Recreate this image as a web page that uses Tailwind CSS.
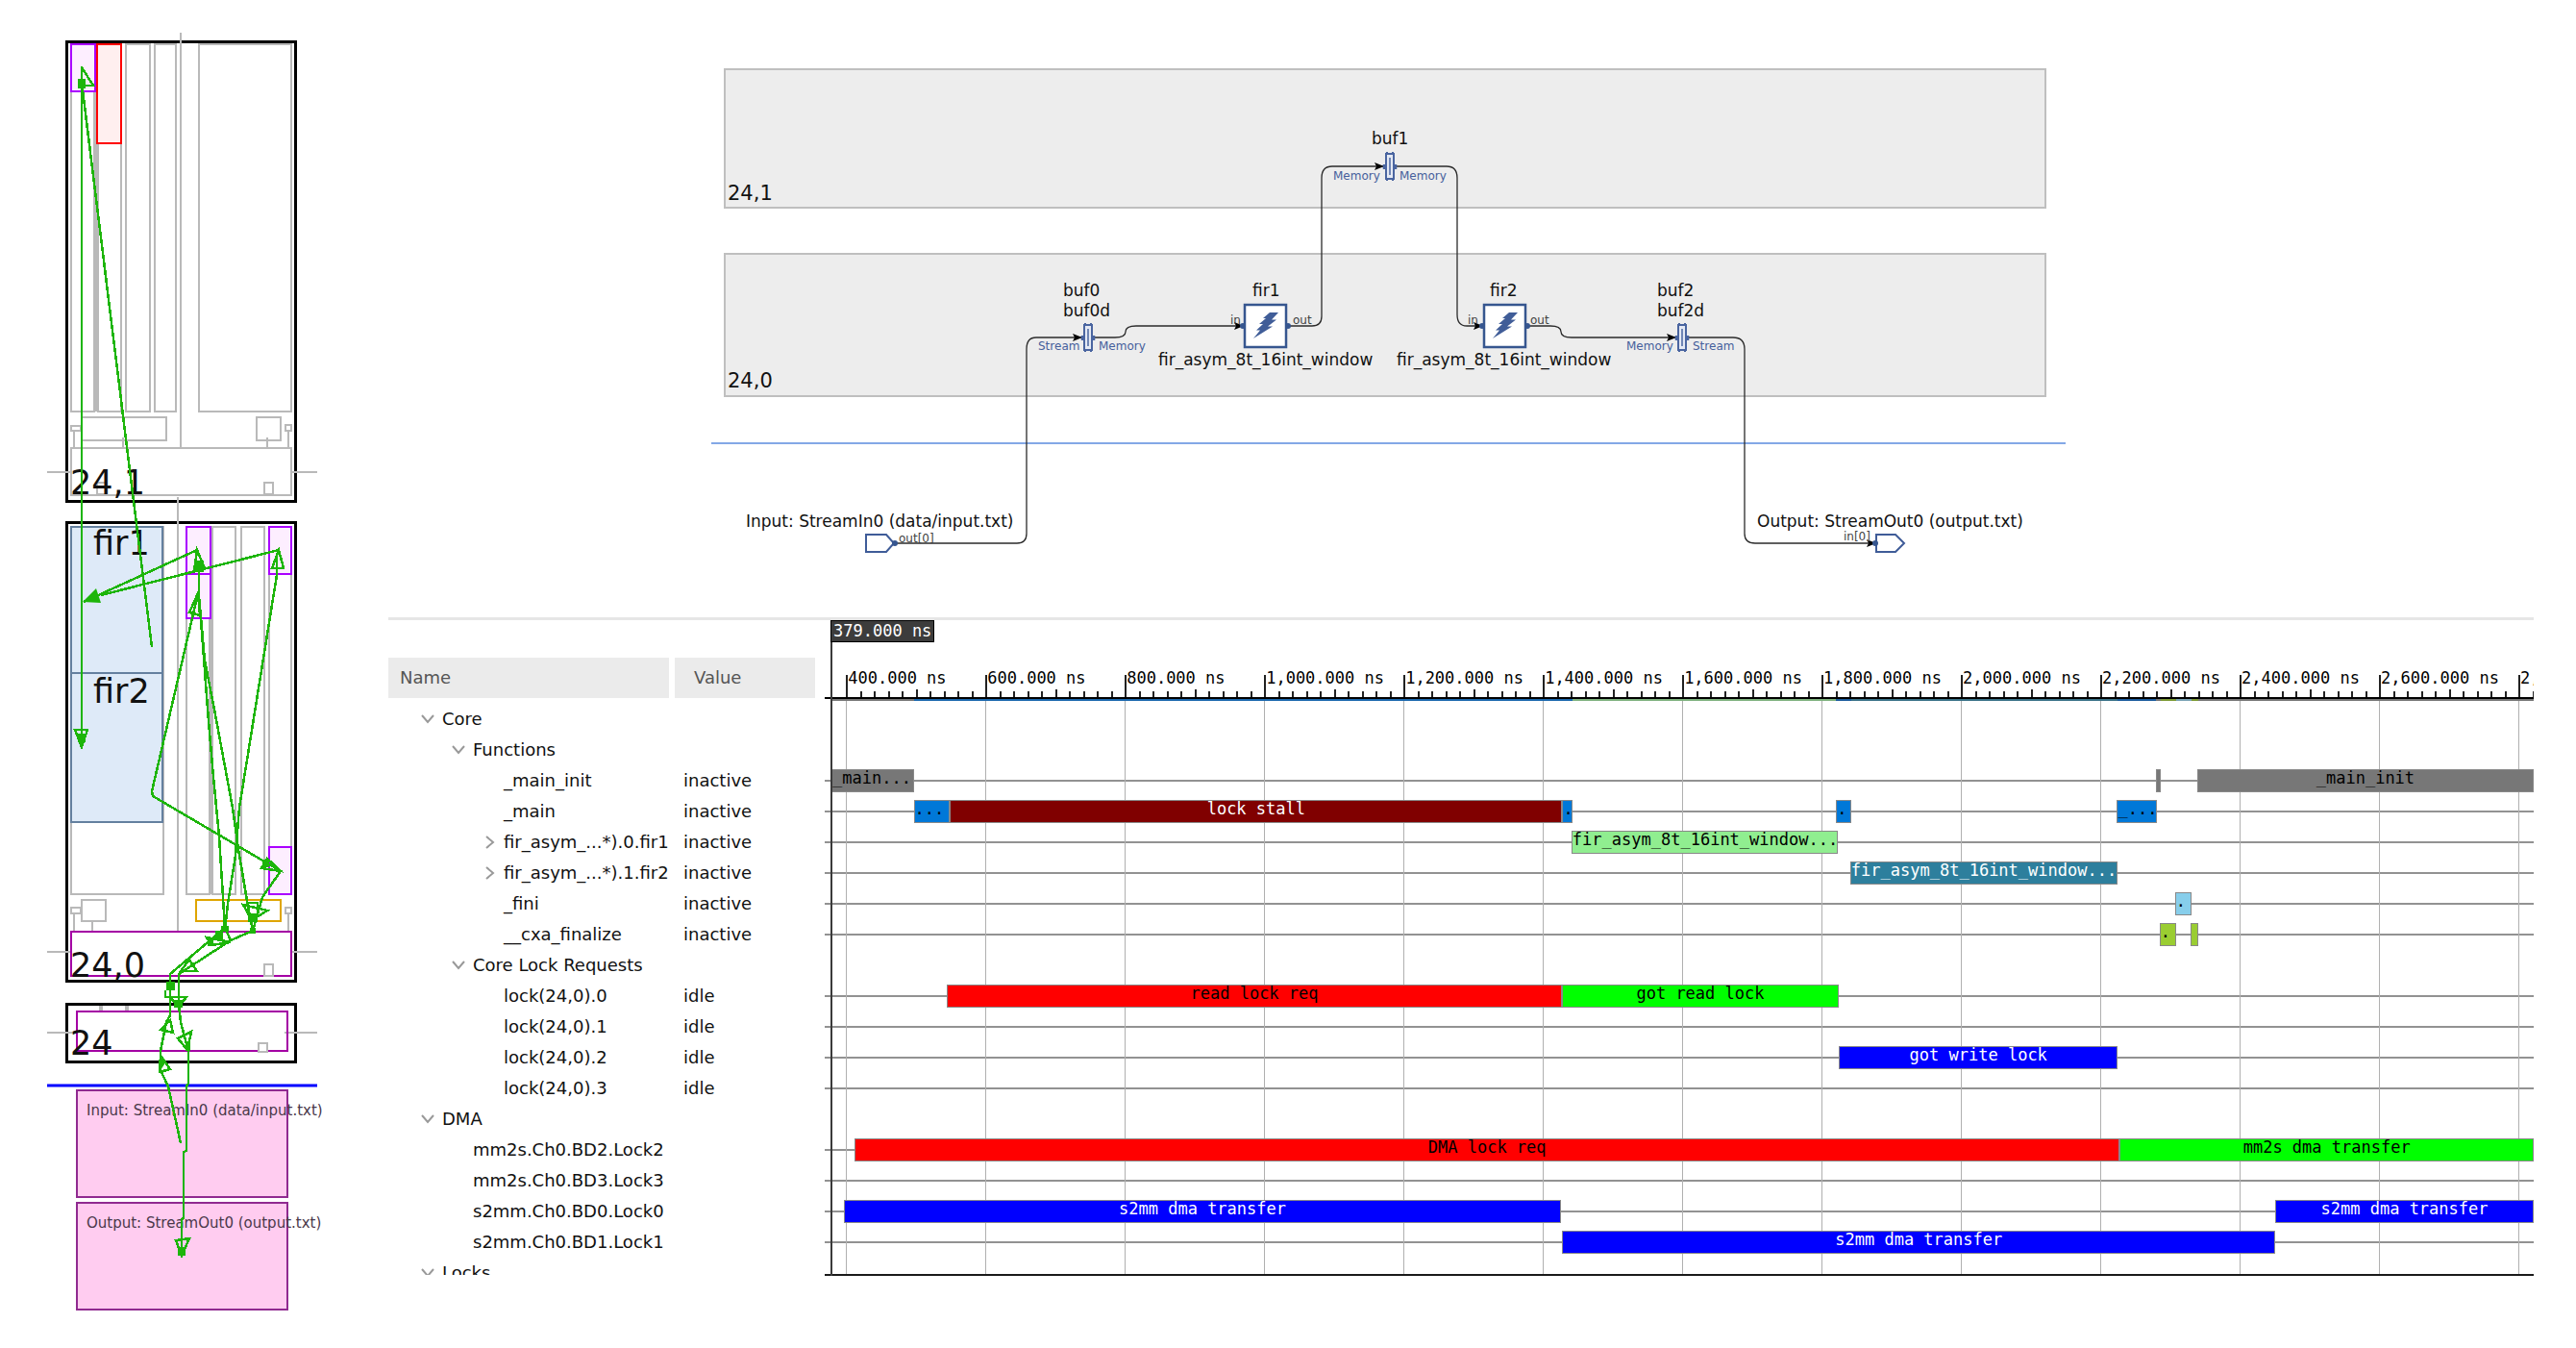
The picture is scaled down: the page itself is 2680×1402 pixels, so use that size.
<!DOCTYPE html>
<html lang="en">
<head>
<meta charset="utf-8">
<title>Graph and trace view</title>
<script src="https://cdn.jsdelivr.net/npm/@tailwindcss/browser@4"></script>
</head>
<body class="flex gap-[73px] bg-white pt-[30px] pr-11 pl-12 font-['DejaVu_Sans',sans-serif] text-[#111]">

<!-- Device floorplan -->
<aside class="w-[283px] shrink-0" aria-label="Device view">
<svg class="block h-auto w-full overflow-visible" viewBox="48 30 283 1342" fill="none">
  <g stroke="#b9b9b9" stroke-width="2" shape-rendering="crispEdges">
    <rect x="74" y="46" width="24" height="382"/><rect x="102" y="46" width="24" height="382"/>
    <rect x="131" y="46" width="25" height="382"/><rect x="161" y="46" width="22" height="382"/>
    <rect x="207" y="46" width="96" height="382"/>
    <path d="M100 46V428" stroke-width="4"/>
    <path d="M86 434H173V458H86M128 455V465M278 455V465M77 447V465M300 448V465"/>
    <rect x="267" y="434" width="25" height="24"/><rect x="74" y="443" width="10" height="5"/><rect x="297" y="442" width="6" height="6"/>
    <rect x="74" y="466" width="229" height="49"/><rect x="275" y="502" width="9" height="12"/><rect x="101" y="502" width="9" height="12"/>
    <rect x="74" y="548" width="96" height="382"/>
    <rect x="194" y="548" width="24" height="382"/><rect x="221" y="548" width="24" height="382"/>
    <rect x="251" y="548" width="24" height="382"/><rect x="280" y="548" width="23" height="382"/>
    <path d="M219.500 548V930" stroke-width="3"/>
    <rect x="85" y="936" width="25" height="22"/><rect x="74" y="944" width="10" height="6"/><rect x="297" y="944" width="6" height="6"/>
    <path d="M77 950V968M96 958V968M300 950V968"/>
  </g>
  <g stroke="#000" stroke-width="3" shape-rendering="crispEdges">
    <rect x="69" y="43" width="238" height="478"/><rect x="69" y="543" width="238" height="477"/><rect x="69" y="1044" width="238" height="60"/>
  </g>
  <g stroke="#b9b9b9" stroke-width="2" shape-rendering="crispEdges">
    <path d="M188 34V465M185 517V968M49 491H74M303 491H330M49 990H74M303 990H330M49 1074H80M296 1074H330"/>
    <path d="M105 1046V1052M132 1046V1052" stroke-width="4"/>
  </g>
  <g stroke="#a0f" stroke-width="2" fill="#fdeeff" shape-rendering="crispEdges">
    <rect x="74" y="46" width="25" height="49"/>
    <rect x="194" y="548" width="25" height="49"/><rect x="194" y="597" width="25" height="46"/>
    <rect x="280" y="548" width="23" height="49"/><rect x="280" y="881" width="23" height="49"/>
  </g>
  <rect x="101" y="46" width="25" height="103" fill="#ffefef" stroke="#f00" stroke-width="2"/>
  <g stroke="#64809f" stroke-width="2" fill="#deeaf8" shape-rendering="crispEdges">
    <rect x="74" y="548" width="95" height="152"/><rect x="74" y="700" width="95" height="155"/>
  </g>
  <rect x="204" y="936" width="88" height="22" stroke="#dfa500" stroke-width="2"/>
  <g stroke="#a400a4" stroke-width="2" shape-rendering="crispEdges">
    <rect x="74" y="969" width="229" height="46"/><rect x="80" y="1052" width="219" height="41"/>
  </g>
  <g stroke="#b9b9b9" stroke-width="2" fill="#fff" shape-rendering="crispEdges">
    <rect x="275" y="1003" width="9" height="12"/><rect x="269" y="1085" width="9" height="9"/>
  </g>
  <path d="M49 1129H330" stroke="#00f" stroke-width="3"/>
  <g stroke="#902a90" stroke-width="2" fill="#ffccf0" shape-rendering="crispEdges">
    <rect x="80" y="1134" width="219" height="111"/><rect x="80" y="1251" width="219" height="111"/>
  </g>
  <g class="text-[35px]" fill="#111">
    <text x="73" y="514">24,1</text><text x="97" y="577">fir1</text><text x="97" y="731">fir2</text>
    <text x="73" y="1016">24,0</text><text x="73" y="1097">24</text>
  </g>
  <g class="text-[15px]" fill="#4a384a">
    <text x="90" y="1160">Input: StreamIn0 (data/input.txt)</text>
    <text x="90" y="1277">Output: StreamOut0 (output.txt)</text>
  </g>
  <!-- Data-flow nets -->
  <g stroke="#1db50a" stroke-width="2.500" shape-rendering="crispEdges">
    <path d="M85 69V777M85 86L140 529L158 673M85 70L97 89H85"/>
    <path d="M205 572L87 626M290 572L105 619"/>
    <path d="M205 572L213 591L202 594ZM207 595V620L210 658L217 750L222 808L228 870L232 933L234 968"/>
    <path d="M207 620L213 687L223 738L242 840L248 883L257 937L263 968"/>
    <path d="M288 598L249 840L245 890L237 940L234 968"/>
    <path d="M206 617L158 823L159 828L292 906L273 933L263 968"/>
    <path d="M206 617L197 637L208 640ZM290 572L295 591H283ZM288 580V598M78 759H91L85 777Z"/>
    <path d="M278 893L272 903L292 906ZM253 941L278 947L262 957ZM258 939H268V951H258Z"/>
    <path d="M234 965L177 1013V1056L173 1063L167 1093V1113L175 1130L188 1189"/>
    <path d="M263 968L240 978L186 1013V1045L188 1063L196 1093V1127L194 1130V1197L191 1198V1267L189 1268V1306"/>
    <path d="M215 975L240 980L220 983ZM234 965L240 978M197 998L205 1010H188ZM172 1030V1037H194L186 1047L177 1037"/>
    <path d="M167 1071L177 1061L180 1074ZM185 1080L199 1073L195 1092ZM167 1098L177 1112L166 1115ZM183 1290L197 1288L189 1306Z"/>
  </g>
  <g fill="#1db50a">
    <path d="M86 626L100 612L105 627ZM81 82H89V92H81ZM202 583H212V595H202ZM81 763H89V772H81ZM224 968H232V977H224ZM258 950H268V959H258ZM230 963H238V969H230Z"/>
    <path d="M173 1021H182V1030H173ZM181 1040H190V1048H181ZM167 1096L173 1104L167 1113ZM193 1083H198V1093H193ZM216 978H222V984H216ZM185 1297H193V1306H185ZM273 894H280V902H273ZM260 965H266V971H260Z"/>
  </g>
</svg>
</aside>

<main class="min-w-0 flex-1">

<!-- Dataflow graph -->
<svg class="block h-auto w-full" viewBox="404 30 2232 612" fill="none" role="img" aria-label="Dataflow graph">
  <defs>
    <marker id="arrow" viewBox="0 0 10 8" refX="9" refY="4" markerWidth="10" markerHeight="8" markerUnits="userSpaceOnUse" orient="auto"><path d="M0 0L10 4L0 8L2 4Z" fill="#000"/></marker>
    <g id="buffer" stroke="#4a65a0" stroke-width="2">
      <rect x="-4" y="-13" width="8" height="26" fill="#e4e9f4"/><path d="M0 -9V9" stroke-width="1.500"/><path d="M-3 -15V-13M3 -15V-13M-3 13V15M3 13V15"/><path d="M-6 -2V3M6 -2V3" stroke-width="2.500"/>
    </g>
    <g id="kernel">
      <rect x="1" y="1" width="43" height="44" fill="#fff" stroke="#36568f" stroke-width="2.500"/>
      <path d="M27 9H36L29 16.500H34L25 23.500H30L10 36L17 27.500H13L20 21H16L23 15H20Z" fill="#405d98"/>
      <circle cx="-1" cy="23" r="3" fill="#36568f"/><circle cx="46" cy="23" r="3" fill="#36568f"/>
    </g>
  </defs>
  <g fill="#ededed" stroke="#bfbfbf" stroke-width="2">
    <rect x="754" y="72" width="1374" height="144"/><rect x="754" y="264" width="1374" height="148"/>
  </g>
  <path d="M740 461H2149" stroke="#83a8e6" stroke-width="2"/>
  <g stroke="#2b2b2b" stroke-width="1.300">
    <path d="M932 565H1058Q1068 565 1068 555V363Q1068 351 1078 351H1125" marker-end="url(#arrow)"/>
    <path d="M1139 351H1160Q1171 351 1171 345Q1171 339 1182 339H1293" marker-end="url(#arrow)"/>
    <path d="M1341 339H1365Q1375 339 1375 329V185Q1375 173 1386 173H1439" marker-end="url(#arrow)"/>
    <path d="M1452 173H1505Q1516 173 1516 185V327Q1516 339 1526 339H1542" marker-end="url(#arrow)"/>
    <path d="M1589 339H1613Q1624 339 1624 345Q1624 351 1635 351H1743" marker-end="url(#arrow)"/>
    <path d="M1757 351H1803Q1815 351 1815 363V555Q1815 565 1826 565H1951" marker-end="url(#arrow)"/>
  </g>
  <use href="#buffer" x="1132" y="351"/><use href="#buffer" x="1446" y="173"/><use href="#buffer" x="1750" y="351"/>
  <use href="#kernel" x="1294" y="316"/><use href="#kernel" x="1543" y="316"/>
  <g fill="#fff" stroke="#3f5c98" stroke-width="2">
    <path d="M901 556H922L930 565L922 574H901Z"/><path d="M1952 556H1972L1981 565L1972 574H1952Z"/>
  </g>
  <circle cx="931" cy="565" r="3" fill="#36568f"/><circle cx="1951" cy="565" r="3" fill="#36568f"/>
  <g class="text-[21px]" fill="#111"><text x="757" y="208">24,1</text><text x="757" y="403">24,0</text></g>
  <g class="text-[17px]" fill="#111">
    <text x="1427" y="150">buf1</text>
    <text x="1106" y="308">buf0</text><text x="1106" y="329">buf0d</text>
    <text x="1303" y="308">fir1</text><text x="1205" y="380">fir_asym_8t_16int_window</text>
    <text x="1550" y="308">fir2</text><text x="1453" y="380">fir_asym_8t_16int_window</text>
    <text x="1724" y="308">buf2</text><text x="1724" y="329">buf2d</text>
    <text x="776" y="548">Input: StreamIn0 (data/input.txt)</text>
    <text x="1828" y="548">Output: StreamOut0 (output.txt)</text>
  </g>
  <g class="text-xs" fill="#444">
    <text x="1280" y="337">in</text><text x="1345" y="337">out</text>
    <text x="1527" y="337">in</text><text x="1592" y="337">out</text>
    <text x="935" y="564">out[0]</text><text x="1918" y="562">in[0]</text>
  </g>
  <g class="text-xs" fill="#46609c">
    <text x="1387" y="187">Memory</text><text x="1456" y="187">Memory</text>
    <text x="1080" y="364">Stream</text><text x="1143" y="364">Memory</text>
    <text x="1692" y="364">Memory</text><text x="1761" y="364">Stream</text>
  </g>
</svg>

<!-- Trace viewer -->
<section class="flex h-[685px] gap-[10px] overflow-hidden border-t-[3px] border-[#e6e6e6]" aria-label="Trace">
  <div class="h-[681px] w-[444px] shrink-0 overflow-hidden pt-[39px]">
    <table class="w-full table-fixed border-separate border-spacing-0 text-lg leading-6">
      <thead>
        <tr class="h-[42px] text-left text-[#555]">
          <th class="w-[298px] border-r-[6px] border-white bg-[#ebebeb] pl-3 font-normal">Name</th>
          <th class="bg-[#ebebeb] pl-5 font-normal">Value</th>
        </tr>
        <tr class="h-[6px]"><td class="p-0" colspan="2"></td></tr>
      </thead>
      <tbody id="signals"></tbody>
    </table>
  </div>
  <div class="relative min-w-0 flex-1 font-['DejaVu_Sans_Mono',monospace] text-[17px]">
    <div id="lanes" class="pt-[87px]"></div>
    <div id="plot" class="absolute inset-y-0 right-0 left-[7px] overflow-hidden"></div>
    <div class="absolute top-[80px] right-0 left-0 h-[2px] bg-black"></div>
    <div class="absolute right-0 bottom-0 left-0 h-[2px] bg-[#1a1a1a]"></div>
    <div class="absolute top-0 bottom-0 left-[6px] w-[2px] bg-[#3a3a3a]"></div>
    <div class="absolute top-0 left-[6px] border border-black bg-[#3c3c3c] px-[2px] leading-[21px] text-white">379.000 ns</div>
  </div>
</section>
</main>

<script>
const START = 379, END = 2822;
const pct = ns => (ns - START) / (END - START) * 100;

const FILL = {
  gray: 'bg-[#777] text-black', blue: 'bg-[#0078d8] text-black', maroon: 'bg-[#800000] text-white',
  lime: 'bg-[#90ee90] text-black', teal: 'bg-[#2d7f9d] text-white', sky: 'bg-[#87ceeb] text-black',
  olive: 'bg-[#9acd32] text-black', red: 'bg-[#f00] text-black', green: 'bg-[#0f0] text-black', navy: 'bg-[#00f] text-white'
};
const INDENT = ['pl-[34px]', 'pl-[66px]', 'pl-[98px]'];

// name, depth, toggle state, value, segments [from ns, to ns, fill, label]; null means no lane
const signals = [
  ['Core', 0, 'open', '', null],
  ['Functions', 1, 'open', '', null],
  ['_main_init', 2, '', 'inactive', [[379, 497, 'gray', '_main...'], [2280, 2287, 'gray', ''], [2339, 2822, 'gray', '_main_init']]],
  ['_main', 2, '', 'inactive', [[497, 549, 'blue', '...'], [549, 1428, 'maroon', 'lock stall'], [1428, 1443, 'blue', '.'], [1821, 1843, 'blue', '.'], [2224, 2281, 'blue', '_...']]],
  ['fir_asym_...*).0.fir1', 2, 'closed', 'inactive', [[1441, 1823, 'lime', 'fir_asym_8t_16int_window...']]],
  ['fir_asym_...*).1.fir2', 2, 'closed', 'inactive', [[1841, 2225, 'teal', 'fir_asym_8t_16int_window...']]],
  ['_fini', 2, '', 'inactive', [[2307, 2331, 'sky', '.']]],
  ['__cxa_finalize', 2, '', 'inactive', [[2285, 2309, 'olive', '.'], [2329, 2341, 'olive', '']]],
  ['Core Lock Requests', 1, 'open', '', null],
  ['lock(24,0).0', 2, '', 'idle', [[544, 1428, 'red', 'read lock req'], [1428, 1824, 'green', 'got read lock']]],
  ['lock(24,0).1', 2, '', 'idle', []],
  ['lock(24,0).2', 2, '', 'idle', [[1825, 2225, 'navy', 'got write lock']]],
  ['lock(24,0).3', 2, '', 'idle', []],
  ['DMA', 0, 'open', '', null],
  ['mm2s.Ch0.BD2.Lock2', 1, '', '', [[412, 2228, 'red', 'DMA lock req'], [2228, 2822, 'green', 'mm2s dma transfer']]],
  ['mm2s.Ch0.BD3.Lock3', 1, '', '', []],
  ['s2mm.Ch0.BD0.Lock0', 1, '', '', [[397, 1426, 'navy', 's2mm dma transfer'], [2451, 2822, 'navy', 's2mm dma transfer']]],
  ['s2mm.Ch0.BD1.Lock1', 1, '', '', [[1428, 2451, 'navy', 's2mm dma transfer']]],
  ['Locks', 0, 'open', '', null]
];

const chevron = {
  open: '<svg width="14" height="10" viewBox="0 0 14 10" fill="none" stroke="#999" stroke-width="2"><path d="M1 1L7 8L13 1"/></svg>',
  closed: '<svg class="ml-[3px]" width="10" height="14" viewBox="0 0 10 14" fill="none" stroke="#999" stroke-width="2"><path d="M1 1L8 7L1 13"/></svg>'
};

document.getElementById('signals').innerHTML = signals.map(([name, depth, state, value]) => `
  <tr class="h-8">
    <td class="p-0"><div class="flex h-8 items-center whitespace-nowrap ${INDENT[depth]}">
      ${state ? `<button type="button" class="w-[22px] shrink-0" aria-label="${name}" aria-expanded="${state === 'open'}">${chevron[state]}</button>` : '<span class="w-[22px] shrink-0"></span>'}<span>${name}</span>
    </div></td>
    <td class="py-0 pl-[9px]">${value}</td>
  </tr>`).join('');

document.getElementById('lanes').innerHTML = signals.map(([, , , , segs]) =>
  `<div class="flex h-8 items-center">${segs ? '<div class="h-[2px] w-full bg-[#929292]"></div>' : ''}</div>`).join('');

// Ruler: labelled ticks every 200 ns, small ones every 20 ns
let html = '';
for (let t = 400; t < END; t += 20) {
  const major = t % 200 === 0, mid = t % 100 === 0;
  html += `<div class="absolute ${major ? 'top-[57px] h-[23px]' : mid ? 'top-[72px] h-2' : 'top-[74px] h-[6px]'} w-[2px] bg-[#222]" style="left:${pct(t)}%"></div>`;
  if (major) {
    const label = t.toLocaleString('en-US') + '.000 ns';
    html += `<div class="absolute top-[83px] bottom-0 w-px bg-[#b0b0b0]" style="left:${pct(t)}%"></div>
      <div class="absolute top-[50px] pl-[2px] leading-5 whitespace-nowrap text-black" style="left:${pct(t)}%">${label}</div>`;
  }
}
// Activity summary under the ruler
const summary = [[379, 497, 'bg-[#777]'], [497, 1443, 'bg-[#1c68ae]'], [1443, 1821, 'bg-[#7fb27f]'], [1821, 1843, 'bg-[#1c5c9e]'], [1843, 2225, 'bg-[#3a7288]'],
  [2225, 2280, 'bg-[#1c5c9e]'], [2280, 2287, 'bg-[#777]'], [2287, 2309, 'bg-[#7d9a35]'], [2309, 2331, 'bg-[#7ba3b5]'], [2331, 2341, 'bg-[#7d9a35]'], [2341, 2822, 'bg-[#777]']];
html += summary.map(([a, b, c]) => `<div class="absolute top-[82px] h-[2px] ${c}" style="left:${pct(a)}%;width:${pct(b) - pct(a)}%"></div>`).join('');
html += '<div class="absolute inset-x-0 top-[87px]">' + signals.map(([, , , , segs]) => `<div class="relative h-8">${(segs || []).map(([a, b, c, label]) => {
  const cut = label.endsWith('.');
  return `<div class="absolute top-1 flex h-6 overflow-hidden border border-[#888] leading-4 whitespace-nowrap ${cut ? 'justify-start' : 'justify-center'} ${FILL[c]}" style="left:${pct(a)}%;width:${pct(b) - pct(a)}%">${label}</div>`;
}).join('')}</div>`).join('') + '</div>';
document.getElementById('plot').innerHTML = html;
</script>
</body>
</html>
